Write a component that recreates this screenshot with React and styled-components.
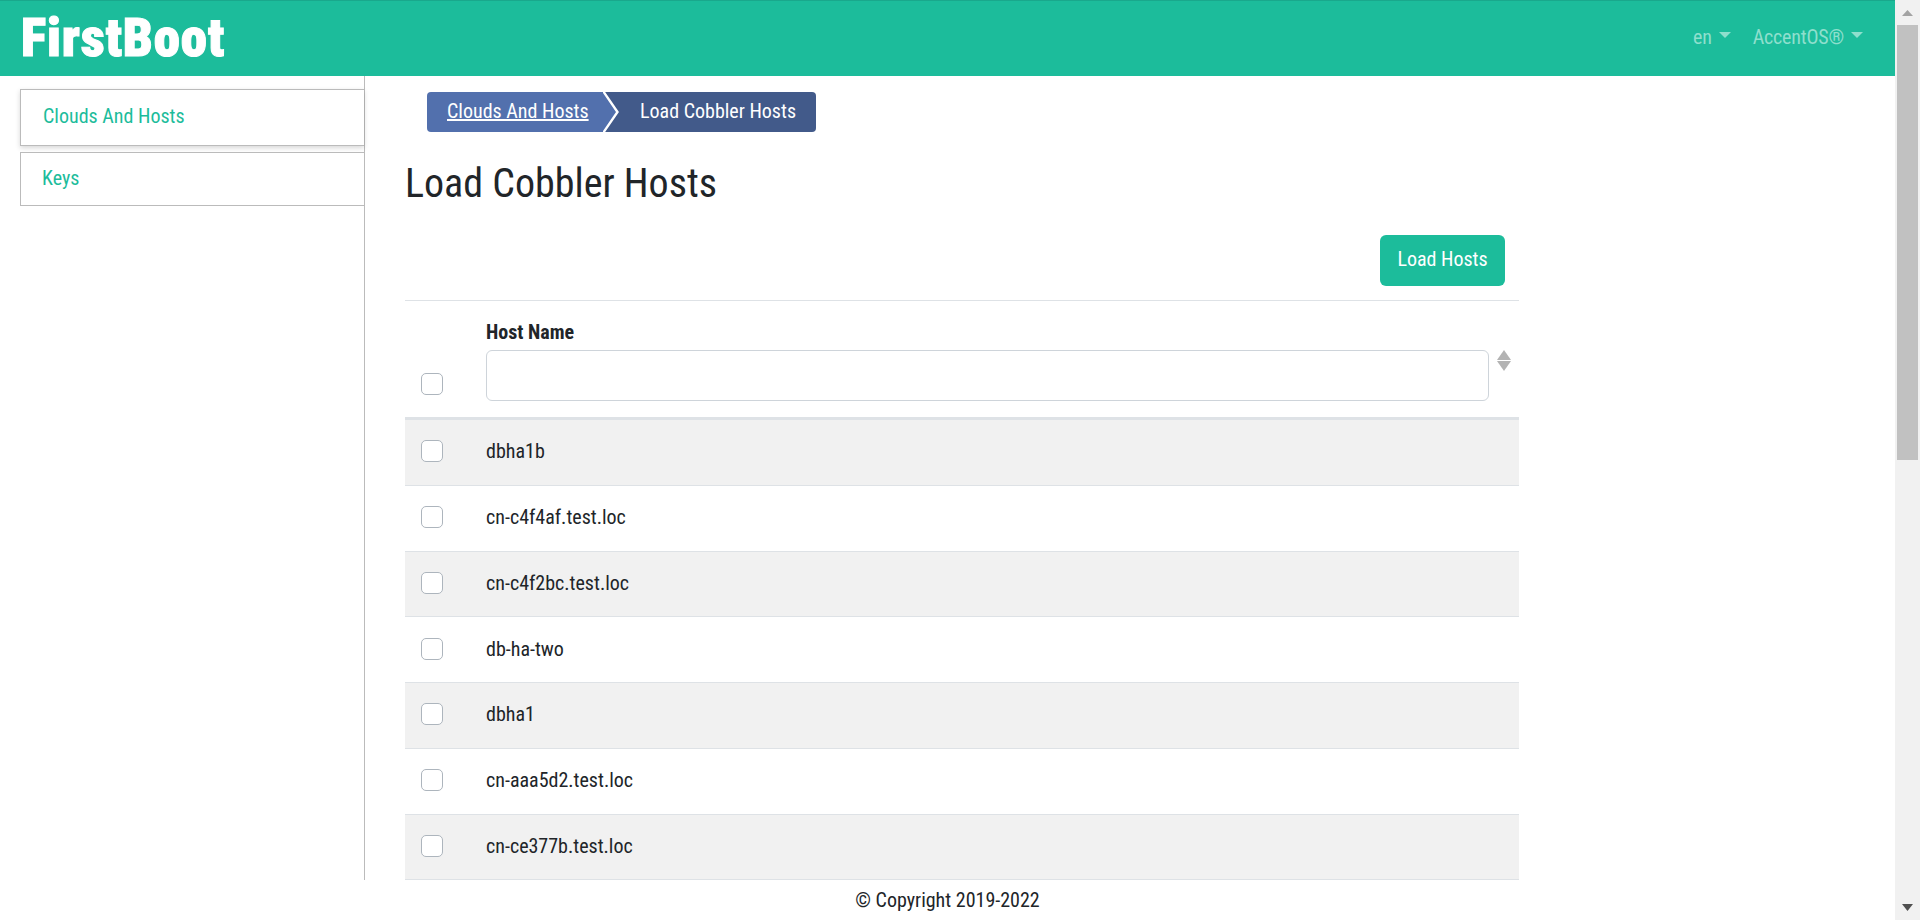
import React from 'react';
import styled, { createGlobalStyle } from 'styled-components';

const font = `"Roboto", "Liberation Sans", sans-serif`;

const Global = createGlobalStyle`
  html, body { margin: 0; padding: 0; height: 100%; overflow: hidden; background: #fff; }
  * { box-sizing: border-box; }
  body { font-family: ${font}; font-stretch: 75%; color: #212529; }
`;

const Shell = styled.div`
  display: flex;
  height: 920px;
  width: 1920px;
`;
const Page = styled.div`
  flex: 1;
  min-width: 0;
  display: flex;
  flex-direction: column;
  height: 100%;
`;
const Header = styled.header`
  height: 76px;
  flex: none;
  background: #1cbc9b;
  border-top: 1px solid #19a88c;
  display: flex;
  align-items: center;
  justify-content: space-between;
  padding: 0 32px 0 22px;
`;
const Logo = styled.div`
  font-family: "Roboto", sans-serif;
  font-weight: 900;
  font-stretch: 75%;
  font-size: 53px;
  letter-spacing: 0.8px;
  line-height: 1;
  color: #fff;
  -webkit-text-stroke: 1px #fff;
  margin-left: -1px;
`;
const HeaderNav = styled.nav`
  display: flex;
  gap: 22px;
  align-items: center;
  margin-top: -3px;
`;
const NavLink = styled.a`
  display: inline-flex;
  align-items: center;
  gap: 7px;
  font-size: 20px;
  letter-spacing: -0.2px;
  color: #8edfcd;
  &::after {
    content: '';
    width: 0;
    height: 0;
    border-left: 6px solid transparent;
    border-right: 6px solid transparent;
    border-top: 6px solid #8edfcd;
    margin-top: -4px;
  }
`;
const Body = styled.div`
  flex: 1;
  min-height: 0;
  display: flex;
  overflow: hidden;
`;
const Sidebar = styled.aside`
  flex: none;
  width: 365px;
  border-right: 1px solid #bbb;
  padding: 13px 0 0 20px;
  display: flex;
  flex-direction: column;
  gap: 6px;
`;
const SideItem = styled.a`
  display: flex;
  align-items: center;
  border: 1px solid #bbb;
  border-right: 0;
  color: #1cbc9b;
  font-size: 20px;
  height: ${p => (p.$active ? '57px' : '54px')};
  padding-left: ${p => (p.$active ? '22px' : '21px')};
  padding-bottom: ${p => (p.$active ? '4px' : '2px')};
  box-shadow: ${p => (p.$active ? '0 2px 5px rgba(0,0,0,.16)' : 'none')};
`;
const Main = styled.main`
  flex: 1;
  min-width: 0;
  padding: 16px 0 0 40px;
`;
const Crumbs = styled.div`
  display: inline-flex;
  height: 40px;
  margin-left: 22px;
  border-radius: 4px;
  overflow: hidden;
  font-size: 20px;
  color: #fff;
  white-space: nowrap;
`;
const CrumbLink = styled.a`
  display: flex;
  align-items: center;
  background: #5270ad;
  padding: 0 0 2px 20px;
  width: 176px;
  color: #fff;
  text-decoration: underline;
`;
const Chevron = styled.svg`
  width: 16px;
  height: 40px;
  flex: none;
`;
const CrumbCurrent = styled.span`
  display: flex;
  align-items: center;
  background: #425a8a;
  padding: 0 0 2px 21px;
  width: 197px;
`;
const Title = styled.h1`
  margin: 27px 0 0;
  font-size: 40px;
  font-weight: 400;
  line-height: 50px;
  color: #212529;
`;
const Content = styled.div`
  width: 1114px;
`;
const Toolbar = styled.div`
  display: flex;
  justify-content: flex-end;
  padding: 26px 14px 14px 0;
  border-bottom: 1px solid #dee2e6;
`;
const Button = styled.button`
  width: 125px;
  height: 51px;
  border: 0;
  border-radius: 6px;
  background: #1cbc9b;
  color: #fff;
  font-family: inherit;
  font-stretch: inherit;
  font-size: 20px;
  padding: 0 0 4px;
`;
const HeadRow = styled.div`
  display: flex;
  align-items: flex-end;
  height: 119px;
  border-bottom: 3px solid #dee2e6;
`;
const CheckCell = styled.div`
  flex: none;
  width: 81px;
  padding-left: 16px;
`;
const HeadInner = styled.div`
  flex: 1;
  display: flex;
  align-items: flex-start;
  gap: 8px;
  padding-bottom: 16px;
  padding-right: 8px;
`;
const HeadLabel = styled.div`
  flex: 1;
  font-size: 20px;
  font-weight: 700;
  line-height: 24px;
  color: #212529;
`;
const Filter = styled.input`
  display: block;
  width: 100%;
  height: 51px;
  margin-top: 6px;
  border: 1px solid #ced4da;
  border-radius: 6px;
  background: #fff;
`;
const Sort = styled.svg`
  width: 14px;
  height: 21px;
  flex: none;
  margin-top: 30px;
`;
const Check = styled.input.attrs({ type: 'checkbox' })`
  appearance: none;
  display: block;
  width: 22px;
  height: 22px;
  margin: 0 0 ${p => (p.$head ? '22px' : '0')};
  border: 1px solid #adb5bd;
  border-radius: 5px;
  background: #fff;
`;
const Row = styled.div`
  display: flex;
  align-items: center;
  height: 65.75px;
  padding-bottom: 2px;
  background: ${p => (p.$odd ? '#f1f1f1' : '#fff')};
  border-bottom: 1px solid #dee2e6;
`;
const HostName = styled.div`
  flex: 1;
  font-size: 20px;
  color: #212529;
`;
const Footer = styled.footer`
  flex: none;
  height: 40px;
  background: #fff;
  display: flex;
  align-items: center;
  justify-content: center;
  font-size: 20px;
  color: #212529;
`;
const ScrollTrack = styled.div`
  flex: none;
  width: 25px;
  height: 100%;
  background: #f1f1f1;
  display: flex;
  flex-direction: column;
  align-items: center;
`;
const ScrollArrow = styled.svg`
  width: 25px;
  height: 25px;
  flex: none;
`;
const ScrollThumb = styled.div`
  width: 21px;
  height: 435px;
  background: #c1c1c1;
  flex: none;
`;
const ScrollSpace = styled.div`
  flex: 1;
`;

const hosts = ['dbha1b', 'cn-c4f4af.test.loc', 'cn-c4f2bc.test.loc', 'db-ha-two', 'dbha1', 'cn-aaa5d2.test.loc', 'cn-ce377b.test.loc'];

export default function App() {
  return (
    <>
      <Global />
      <Shell>
        <Page>
          <Header>
            <Logo>FirstBoot</Logo>
            <HeaderNav>
              <NavLink>en</NavLink>
              <NavLink>AccentOS®</NavLink>
            </HeaderNav>
          </Header>
          <Body>
            <Sidebar>
              <SideItem $active>Clouds And Hosts</SideItem>
              <SideItem>Keys</SideItem>
            </Sidebar>
            <Main>
              <Crumbs>
                <CrumbLink>Clouds And Hosts</CrumbLink>
                <Chevron viewBox="0 0 16 40">
                  <rect width="16" height="40" fill="#425a8a" />
                  <path d="M0 0L14 20L0 40Z" fill="#5270ad" />
                  <path d="M0 -1L14.5 20L0 41" fill="none" stroke="#fff" strokeWidth="2.4" />
                </Chevron>
                <CrumbCurrent>Load Cobbler Hosts</CrumbCurrent>
              </Crumbs>
              <Title>Load Cobbler Hosts</Title>
              <Content>
                <Toolbar>
                  <Button>Load Hosts</Button>
                </Toolbar>
                <HeadRow>
                  <CheckCell><Check $head /></CheckCell>
                  <HeadInner>
                    <HeadLabel>
                      Host Name
                      <Filter />
                    </HeadLabel>
                    <Sort viewBox="0 0 14 21">
                      <path d="M7 0L14 10H0Z" fill="#b3b3b3" />
                      <path d="M0 11H14L7 21Z" fill="#b3b3b3" />
                    </Sort>
                  </HeadInner>
                </HeadRow>
                {hosts.map((h, i) => (
                  <Row key={h} $odd={i % 2 === 0}>
                    <CheckCell><Check /></CheckCell>
                    <HostName>{h}</HostName>
                  </Row>
                ))}
              </Content>
            </Main>
          </Body>
          <Footer>© Copyright 2019-2022</Footer>
        </Page>
        <ScrollTrack>
          <ScrollArrow viewBox="0 0 25 25"><path d="M7 16L12.5 10L18 16Z" fill="#a3a3a3" /></ScrollArrow>
          <ScrollThumb />
          <ScrollSpace />
          <ScrollArrow viewBox="0 0 25 25"><path d="M7 9H18L12.5 16Z" fill="#505050" /></ScrollArrow>
        </ScrollTrack>
      </Shell>
    </>
  );
}
